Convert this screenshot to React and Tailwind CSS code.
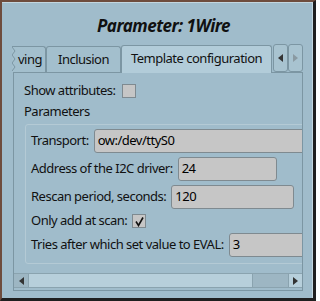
import React from "react";

const font = { fontFamily: '"Noto Sans", "DejaVu Sans", sans-serif' };

function Input({ value, w }) {
  return (
    <div
      className={`h-[24px] ${w} shrink-0 bg-[#c6c6c6] border border-[#7f8a90] rounded-[3px] flex items-center pl-[3px] text-[13px] text-black`}
    >
      {value}
    </div>
  );
}

function Check({ checked }) {
  return (
    <div className="w-[14px] h-[14px] shrink-0 bg-[#c6c6c6] border border-[#7f8a90] flex items-center justify-center">
      {checked && (
        <svg width="11" height="11" viewBox="0 0 11 11">
          <path d="M2 5.5 L4.5 9.5 L9 1.5" stroke="#111" strokeWidth="1.6" fill="none" />
        </svg>
      )}
    </div>
  );
}

export default function App() {
  return (
    <div
      style={font}
      className="w-[316px] h-[301px] bg-[#a0bccb] border-l-2 border-t-2 border-[#6e4c3d] border-r-[3px] border-b-[3px] border-r-[#1f1f1f] border-b-[#1f1f1f] overflow-hidden text-[13px] tracking-[-0.5px] text-[#111]"
    >
      <div className="h-full border-t border-[#c3d6df] border-r border-r-[#c3d6df] flex flex-col pl-[10px] pr-[9px]">
        <div className="h-[24px] mt-[11px] pl-[12px] flex items-center justify-center text-[17px] tracking-[-0.5px] font-bold italic text-[#111]">
          Parameter: 1Wire
        </div>
        {/* Tab bar */}
        <div className="mt-[6px] h-[28px] flex items-end relative z-10">
          <div className="h-[26px] w-[34px] relative border border-[#7c96a3] border-l-0 border-b-0 rounded-tr-[3px] bg-[#a3bfcd] flex items-center overflow-hidden">
            <svg className="absolute left-0 top-0" width="6" height="26" viewBox="0 0 6 26">
              <path d="M0 0 L3 4 L0 8 L3 12 L0 16 L3 20 L0 24" stroke="#7c96a3" fill="none" />
            </svg>
            <span className="ml-[6px]">ving</span>
          </div>
          <div className="h-[26px] w-[75px] border border-[#7c96a3] border-b-0 rounded-t-[3px] bg-[#a3bfcd] flex items-center justify-center">
            Inclusion
          </div>
          <div className="h-[28px] w-[151px] border border-[#7c96a3] border-b-0 rounded-t-[3px] bg-[#b2ccd9] flex items-center justify-center -mb-px pb-px">
            Template configuration
          </div>
          <div className="ml-[1px] h-[28px] w-[30px] flex self-start">
            <div className="w-[15px] h-[28px] border border-[#7c96a3] rounded-[3px] bg-[#a8c3d0] flex items-center justify-center">
              <svg width="5" height="8" viewBox="0 0 5 8"><path d="M5 0 L0 4 L5 8 Z" fill="#333" /></svg>
            </div>
            <div className="w-[15px] h-[28px] border border-[#7c96a3] rounded-[3px] bg-[#a8c3d0] flex items-center justify-center">
              <svg width="5" height="8" viewBox="0 0 5 8"><path d="M0 0 L5 4 L0 8 Z" fill="#8a9aa2" /></svg>
            </div>
          </div>
        </div>
        {/* Panel */}
        <div className="ml-[1px] w-[290px] h-[219px] border border-[#7c96a3] bg-[#a0bccb] flex flex-col overflow-hidden">
          <div className="flex-1 overflow-hidden relative">
            <div className="w-[400px] pl-[10px] pt-[10px]">
              <div className="flex items-center h-[16px] gap-[6px]">
                <span>Show attributes:</span>
                <Check />
              </div>
              <div className="mt-[4px] h-[18px] flex items-center">Parameters</div>
              <div className="mt-[3px] ml-[1px] w-[360px] h-[140px] border border-[#b4cad5] rounded-[3px] pl-[5px] pt-[4px]">
                <div className="flex items-center gap-[5px]">
                  <span>Transport:</span>
                  <Input value="ow:/dev/ttyS0" w="w-[240px]" />
                </div>
                <div className="mt-[4px] flex items-center gap-[5px]">
                  <span>Address of the I2C driver:</span>
                  <Input value="24" w="w-[99px]" />
                </div>
                <div className="mt-[4px] flex items-center gap-[5px]">
                  <span>Rescan period, seconds:</span>
                  <Input value="120" w="w-[123px]" />
                </div>
                <div className="mt-[2px] h-[20px] flex items-center gap-[5px]">
                  <span>Only add at scan:</span>
                  <Check checked />
                </div>
                <div className="mt-[2px] flex items-center gap-[5px]">
                  <span>Tries after which set value to EVAL:</span>
                  <Input value="3" w="w-[120px]" />
                </div>
              </div>
            </div>
          </div>
          {/* Scrollbar */}
          <div className="h-[15px] mb-[2px] flex border-y border-[#8aa3af] bg-[#9db6c3]">
            <div className="w-[14px] flex items-center justify-center">
              <svg width="5" height="8" viewBox="0 0 5 8"><path d="M5 0 L0 4 L5 8 Z" fill="#333" /></svg>
            </div>
            <div className="w-[225px] bg-[#b7cfdb] border-x border-[#8aa3af]" />
            <div className="flex-1" />
            <div className="w-[14px] bg-[#b7cfdb] border-l border-[#8aa3af] flex items-center justify-center">
              <svg width="5" height="8" viewBox="0 0 5 8"><path d="M0 0 L5 4 L0 8 Z" fill="#333" /></svg>
            </div>
          </div>
        </div>
      </div>
    </div>
  );
}
